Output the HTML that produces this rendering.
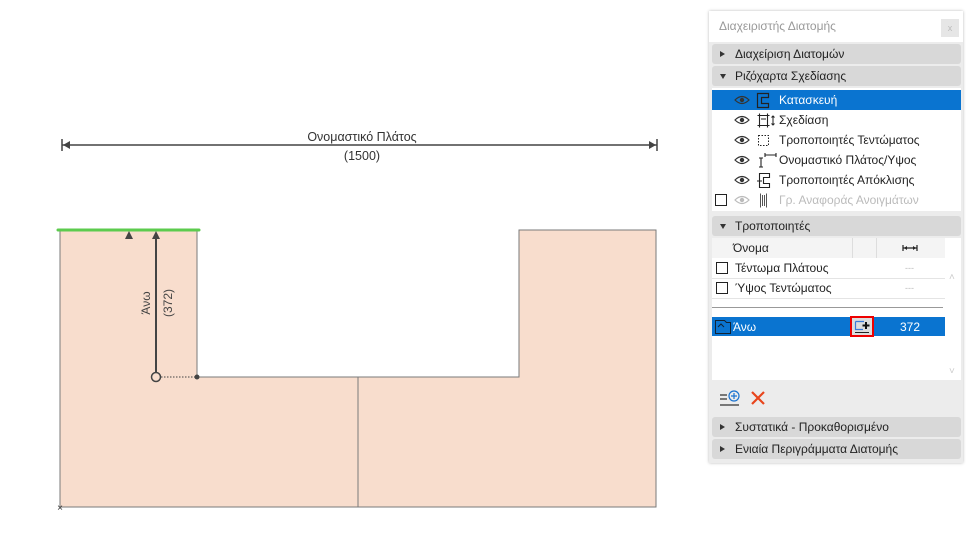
<!DOCTYPE html>
<html><head><meta charset="utf-8"><style>
body{margin:0;width:966px;height:534px;background:#fff;position:relative;overflow:hidden;font-family:"Liberation Sans","DejaVu Sans",sans-serif;}
.a{position:absolute}
.panel{left:709px;top:11px;width:254px;height:452px;background:#ececec;box-shadow:0 0 3px #bbb}
.hdr{position:absolute;left:3px;width:249px;height:20px;background:#d8d8d8;border-radius:3px;font-size:12px;color:#222;line-height:20px}
.hdr span{position:absolute;left:23px}
.tri{position:absolute;left:8px;top:7px;width:0;height:0}
.tr{border-top:3px solid transparent;border-bottom:3px solid transparent;border-left:5px solid #333}
.td{border-left:3.5px solid transparent;border-right:3.5px solid transparent;border-top:5px solid #333;top:8px}
.row{position:absolute;left:3px;width:249px;height:20px;font-size:12px;line-height:20px;color:#222}
.cb{position:absolute;width:10px;height:10px;border:1px solid #222;background:#fff}
.eye{position:absolute;left:22px;top:5px}
.ic{position:absolute;left:44px;top:2px}
</style></head><body>
<svg class="a" style="left:0;top:0" width="700" height="534">
<polygon points="60,230 197,230 197,377 519,377 519,230 656,230 656,507 60,507" fill="#f8ddcd" stroke="#7a7a7a" stroke-width="1"/>
<line x1="358" y1="377" x2="358" y2="507" stroke="#7a7a7a"/>
<line x1="58" y1="230" x2="199" y2="230" stroke="#5ccb4e" stroke-width="3" stroke-linecap="round"/>
<line x1="62" y1="145" x2="657" y2="145" stroke="#444" stroke-width="1.5"/>
<line x1="62" y1="139" x2="62" y2="151" stroke="#444" stroke-width="1.5"/>
<line x1="657" y1="139" x2="657" y2="151" stroke="#444" stroke-width="1.5"/>
<polygon points="63,145 70,141 70,149" fill="#444"/><polygon points="656,145 649,141 649,149" fill="#444"/>
<text x="362" y="141" font-size="12.5" text-anchor="middle" fill="#333" font-family="Liberation Sans">Ονομαστικό Πλάτος</text>
<text x="362" y="160" font-size="12.5" text-anchor="middle" fill="#333" font-family="Liberation Sans">(1500)</text>
<line x1="156" y1="234" x2="156" y2="373" stroke="#444" stroke-width="2"/>
<polygon points="156,231 152,239 160,239" fill="#444"/>
<polygon points="129,231 125,239 133,239" fill="#444"/>
<circle cx="156" cy="377" r="4.5" fill="none" stroke="#444" stroke-width="1.5"/>
<line x1="161" y1="377" x2="196" y2="377" stroke="#444" stroke-dasharray="1.5,1.5"/>
<circle cx="197" cy="377" r="2.5" fill="#444"/>
<text transform="translate(150,303) rotate(-90)" font-size="12" text-anchor="middle" fill="#444" font-family="Liberation Sans">Άνω</text>
<text transform="translate(172,303) rotate(-90)" font-size="12" text-anchor="middle" fill="#444" font-family="Liberation Sans">(372)</text>
<text x="60" y="511" font-size="10" text-anchor="middle" fill="#333">×</text>
</svg>
<div class="a panel">
 <div class="a" style="left:0;top:0;width:254px;height:31px;background:#fff"></div>
 <div class="a" style="left:10px;top:8px;font-size:12px;color:#999">Διαχειριστής Διατομής</div>
 <div class="a" style="left:232px;top:8px;width:18px;height:18px;background:#e6e6e6;color:#bbb;font-size:9px;text-align:center;line-height:18px">x</div>
 <div class="hdr" style="top:33px"><div class="tri tr"></div><span>Διαχείριση Διατομών</span></div>
 <div class="hdr" style="top:55px"><div class="tri td"></div><span>Ριζόχαρτα Σχεδίασης</span></div>
 <div class="a" style="left:3px;top:77px;width:249px;height:123px;background:#fff"></div>
 <div class="row" style="top:79px;background:#0a74d0;color:#fff">
  <svg class="eye" width="16" height="10"><path d="M1,5 Q8,-2 15,5 Q8,12 1,5Z" fill="none" stroke="#333" stroke-width="1.2"/><circle cx="8" cy="5" r="2.2" fill="#333"/></svg>
  <svg class="ic" width="14" height="17"><path d="M1.5,1.5H12.5V5.5H5.5V11.5H12.5V15.5H1.5Z" fill="none" stroke="#222" stroke-width="1.2"/></svg>
  <span style="position:absolute;left:67px">Κατασκευή</span></div>
 <div class="row" style="top:99px">
  <svg class="eye" width="16" height="10"><path d="M1,5 Q8,-2 15,5 Q8,12 1,5Z" fill="none" stroke="#333" stroke-width="1.2"/><circle cx="8" cy="5" r="2.2" fill="#333"/></svg>
  <svg class="ic" width="20" height="17"><path d="M1.5,3.5H13.5M1.5,13.5H13.5M3.5,1.5V15.5M11.5,1.5V15.5M5,7H10" fill="none" stroke="#222" stroke-width="1.1"/><path d="M17,4V13M15.5,5.5L17,4L18.5,5.5M15.5,11.5L17,13L18.5,11.5" fill="none" stroke="#222"/></svg>
  <span style="position:absolute;left:67px">Σχεδίαση</span></div>
 <div class="row" style="top:119px">
  <svg class="eye" width="16" height="10"><path d="M1,5 Q8,-2 15,5 Q8,12 1,5Z" fill="none" stroke="#333" stroke-width="1.2"/><circle cx="8" cy="5" r="2.2" fill="#333"/></svg>
  <svg class="ic" width="16" height="17"><rect x="2.5" y="3.5" width="10" height="10" fill="none" stroke="#222" stroke-dasharray="1.5,1.5"/></svg>
  <span style="position:absolute;left:67px">Τροποποιητές Τεντώματος</span></div>
 <div class="row" style="top:139px">
  <svg class="eye" width="16" height="10"><path d="M1,5 Q8,-2 15,5 Q8,12 1,5Z" fill="none" stroke="#333" stroke-width="1.2"/><circle cx="8" cy="5" r="2.2" fill="#333"/></svg>
  <svg class="ic" width="22" height="17"><path d="M5,6V15M3,6H7M3,15H7M9,3H20M9,1V5M20,1V5" fill="none" stroke="#222" stroke-width="1.1"/></svg>
  <span style="position:absolute;left:67px">Ονομαστικό Πλάτος/Υψος</span></div>
 <div class="row" style="top:159px">
  <svg class="eye" width="16" height="10"><path d="M1,5 Q8,-2 15,5 Q8,12 1,5Z" fill="none" stroke="#333" stroke-width="1.2"/><circle cx="8" cy="5" r="2.2" fill="#333"/></svg>
  <svg class="ic" width="18" height="17"><path d="M3.5,1.5H13.5V5.5H7.5V11.5H13.5V15.5H3.5Z M1,9H6" fill="none" stroke="#222" stroke-width="1.1"/></svg>
  <span style="position:absolute;left:67px">Τροποποιητές Απόκλισης</span></div>
 <div class="row" style="top:179px;color:#bbb"><div class="cb" style="left:3px;top:4px"></div>
  <svg class="eye" width="16" height="10"><path d="M1,5 Q8,-2 15,5 Q8,12 1,5Z" fill="none" stroke="#bbb" stroke-width="1.2"/><circle cx="8" cy="5" r="2.2" fill="#bbb"/></svg>
  <svg class="ic" width="16" height="17"><path d="M4.5,1.5V15.5M10.5,1.5V15.5M6.5,3V14M8.5,3V14" fill="none" stroke="#555" stroke-width="1"/></svg>
  <span style="position:absolute;left:67px">Γρ. Αναφοράς Ανοιγμάτων</span></div>
 <div class="hdr" style="top:205px"><div class="tri td"></div><span>Τροποποιητές</span></div>
 <div class="a" style="left:3px;top:227px;width:249px;height:142px;background:#fff"></div>
 <div class="a" style="left:3px;top:227px;width:233px;height:20px;background:#f4f4f4;font-size:12px;line-height:20px;color:#222"><span style="position:absolute;left:21px">Όνομα</span><span style="position:absolute;left:140px;top:0;height:20px;border-left:1px solid #ddd"></span><span style="position:absolute;left:164px;top:0;height:20px;border-left:1px solid #ddd"></span>
  <svg style="position:absolute;left:190px;top:6px" width="16" height="8"><path d="M1,4H15M1,1V7M15,1V7" stroke="#222" stroke-width="1.2" fill="none"/><path d="M2,4L5,2V6ZM14,4L11,2V6Z" fill="#222"/></svg></div>
 <div class="row" style="top:247px;width:233px;border-bottom:1px solid #e4e4e4"><div class="cb" style="left:4px;top:4px"></div><span style="position:absolute;left:23px">Τέντωμα Πλάτους</span><span style="position:absolute;left:193px;color:#bbb;font-size:9px">---</span></div>
 <div class="row" style="top:267px;width:233px;border-bottom:1px solid #e4e4e4"><div class="cb" style="left:4px;top:4px"></div><span style="position:absolute;left:23px">Ύψος Τεντώματος</span><span style="position:absolute;left:193px;color:#bbb;font-size:9px">---</span></div>
 <div class="a" style="left:3px;top:296px;width:231px;height:1px;background:#999"></div>
 <div class="row" style="top:306px;width:233px;height:19px;background:#0a74d0;color:#fff">
  <svg style="position:absolute;left:2px;top:2px" width="18" height="16"><path d="M1.5,1.5H10.5L12.5,3.5H16.5V14.5H1.5Z M4,8L7,5L10,8" fill="none" stroke="#123" stroke-width="1"/></svg>
  <span style="position:absolute;left:21px">Άνω</span>
  <span style="position:absolute;left:138px;top:-1px;width:20px;height:17px;border:2px solid #e00;background:#ddd"><svg width="20" height="17"><path d="M3.5,3.5H12M3.5,3.5V11.5H11" fill="none" stroke="#3a7ad9" stroke-width="1.2"/><path d="M14,4V11M10.5,7.5H17.5" stroke="#111" stroke-width="2"/><path d="M3,14.5H17" stroke="#222"/></svg></span>
  <span style="position:absolute;left:188px">372</span></div>
 <div class="a" style="left:240px;top:261px;color:#ccc;font-size:10px">˄</div>
 <div class="a" style="left:240px;top:355px;color:#ccc;font-size:10px">˅</div>
 <svg class="a" style="left:10px;top:378px" width="22" height="18"><path d="M1,6H8M1,10H8M1,16H20" stroke="#333" stroke-width="1.3"/><circle cx="15" cy="7" r="5" fill="none" stroke="#1a73d0" stroke-width="1.2"/><path d="M15,4V10M12,7H18" stroke="#1a73d0" stroke-width="1.2"/></svg>
 <svg class="a" style="left:42px;top:380px" width="14" height="14"><path d="M1,1L13,13M13,1L1,13" stroke="#e8451c" stroke-width="2.2"/></svg>
 <div class="hdr" style="top:406px"><div class="tri tr"></div><span>Συστατικά - Προκαθορισμένο</span></div>
 <div class="hdr" style="top:428px"><div class="tri tr"></div><span>Ενιαία Περιγράμματα Διατομής</span></div>
</div>
</body></html>
